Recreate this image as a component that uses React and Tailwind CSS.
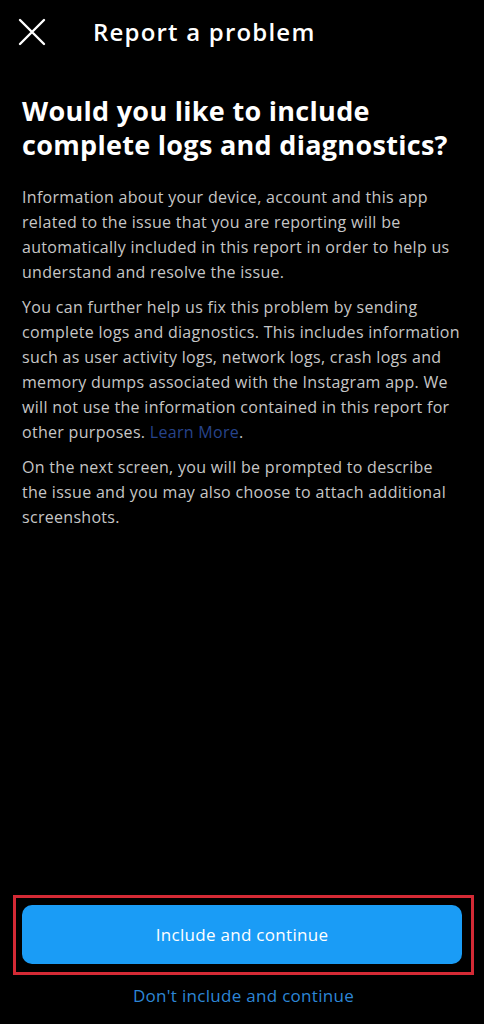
import React from 'react';

const font = { fontFamily: '"Open Sans", "Liberation Sans", sans-serif' };

const App = () => {
    return (
        <div className="min-h-screen w-full bg-black text-white flex flex-col" style={font}>
            <header className="flex items-center h-[64px] pl-[18px]">
                <button className="w-[28px] h-[28px] flex items-center justify-center">
                    <svg width="28" height="28" viewBox="0 0 28 28" fill="none" stroke="white" strokeWidth="2.4" strokeLinecap="round">
                        <path d="M2 2 L26 26 M26 2 L2 26" />
                    </svg>
                </button>
                <h1 className="ml-[47px] text-[24px] font-semibold text-white tracking-[1.2px]">Report a problem</h1>
            </header>

            <main className="flex-1 px-[22px] pt-[30px]">
                <h2 className="text-[27px] leading-[34px] font-bold text-white tracking-[0.3px]">
                    Would you like to include complete logs and diagnostics?
                </h2>
                <div className="mt-[23px] text-[16px] leading-[25px] text-[#c6c6c6] tracking-[0.3px]">
                    <p>
                        Information about your device, account and this app related to the issue that you are reporting will be automatically included in this report in order to help us understand and resolve the issue.
                    </p>
                    <p className="mt-[10px]">
                        You can further help us fix this problem by sending complete logs and diagnostics. This includes information such as user activity logs, network logs, crash logs and memory dumps associated with the Instagram app. We will not use the information contained in this report for other purposes. <span className="text-[#27448c]">Learn More</span>.
                    </p>
                    <p className="mt-[10px]">
                        On the next screen, you will be prompted to describe the issue and you may also choose to attach additional screenshots.
                    </p>
                </div>
            </main>

            <footer className="pl-[13px] pr-[10px] pb-[16px]">
                <div className="border-[3px] border-[#d42a35] pl-[6px] pr-[9px] pt-[7px] pb-[8px]">
                    <button className="w-full h-[59px] rounded-[10px] bg-[#1a9cf6] text-white text-[17px] tracking-[0.3px]">
                        Include and continue
                    </button>
                </div>
                <button className="w-full mt-[8px] text-[17px] text-[#2d86d6] h-[22px] tracking-[0.3px]">
                    Don't include and continue
                </button>
            </footer>
        </div>
    );
};

export default App;
